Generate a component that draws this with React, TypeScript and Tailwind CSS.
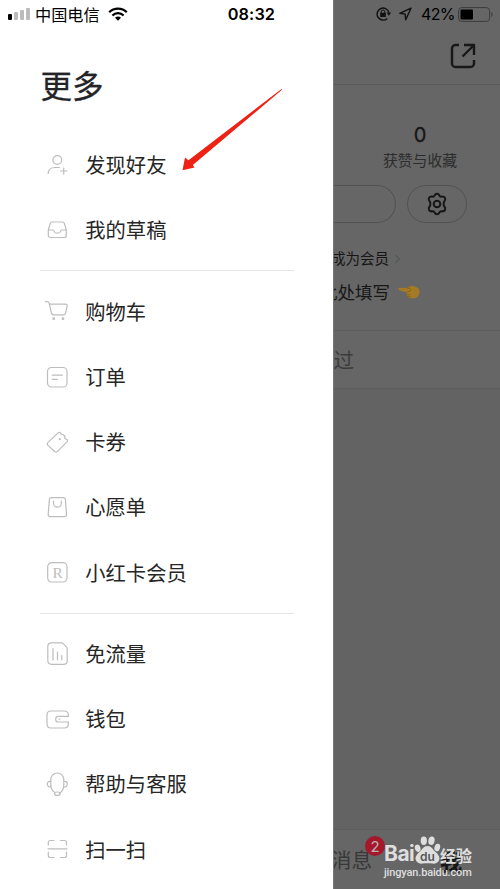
import type { ReactNode } from "react";

const ICONS: Record<string, ReactNode> = {
  friends: (
    <>
      <circle cx="12.3" cy="7" r="4.4" />
      <path d="M3.2 20.500c0-4 3-6 7-6h4.300M15.500 18h6.500M18.700 14.900v6.200" />
    </>
  ),
  drafts: (
    <path d="M7 4h10.600c.9 0 1.400.4 1.700 1.200l2 6.800v5.500a2 2 0 0 1-2 2h-14a2 2 0 0 1-2-2V12l2-6.800C5.600 4.400 6.100 4 7 4zM3.300 12h4.500c1.500 0 1.500 3 3 3h3c1.500 0 1.500-3 3-3h4.500" />
  ),
  cart: (
    <>
      <path d="M.5 2.700h1.800c1.100 0 1.700.600 2 1.800l2.100 9.500c.3 1.300 1 1.900 2.200 1.900h9.800c1.200 0 1.900-.6 2.200-1.800l1.500-7c.3-1.400-.3-2-1.500-2H4.500" />
      <circle cx="8.700" cy="19.700" r=".8" fill="currentColor" />
      <circle cx="18" cy="19.700" r=".8" fill="currentColor" />
    </>
  ),
  order: (
    <>
      <rect x="2.500" y="2.500" width="19.500" height="19.500" rx="4" />
      <path d="M7.200 10.200h10.200M7.200 14.300h5.200" />
    </>
  ),
  coupon: (
    <>
      <path d="m12.600 3.400.7-.6c.8-.7 1.600-.7 2.300 0 .2 1.400 1 2.100 2.500 1.900l.7.7c1 .5 1.500 1.300 1 2.300-.1 1.100.5 1.400 1.700 1.500l.7.6c.6.500.5 1.200 0 1.800l-9.700 9.700c-1 1-2 1-3 0l-6.500-5.900c-1-1-1-2 0-3z" />
      <circle cx="14.800" cy="9.200" r=".5" fill="currentColor" />
    </>
  ),
  wish: (
    <>
      <path d="M6.500 2.700h11.800c1.200 0 2 .7 2.100 1.900l1.100 14.500c.1 1.700-.6 2.500-2.200 2.500H5.400c-1.600 0-2.300-.8-2.200-2.500L4.400 4.600c.1-1.200.9-1.900 2.100-1.900z" />
      <path d="M8.500 6.200v2a3.900 3.900 0 0 0 7.800 0v-2" />
    </>
  ),
  member: (
    <>
      <rect x="2.700" y="2.700" width="19.300" height="19.300" rx="4" />
      <text x="12.600" y="17.500" textAnchor="middle" fontSize="15.500" stroke="none" fill="currentColor" fontFamily="'Liberation Serif', serif">R</text>
    </>
  ),
  data: (
    <>
      <path d="M6.500.9h9.600c1 0 1.700.3 2.400 1l2.800 2.900c.7.7.9 1.300.9 2.300v11.600c0 2.300-1.300 3.600-3.600 3.600H6.500c-2.300 0-3.700-1.300-3.700-3.600V4.500C2.800 2.200 4.200.9 6.500.9z" />
      <path d="M8 6.500v11.300M12.500 10v7.800M16.800 13.500v4.300" />
    </>
  ),
  wallet: (
    <>
      <path d="M23.300 9.300V8c0-2.700-1.200-4-4-4H6C3.300 4 2 5.300 2 8v9c0 2.700 1.300 4 4 4h13.300c2.800 0 4-1.300 4-4v-2" />
      <path d="M23.300 9.300H13.500a2.800 2.800 0 0 0 0 5.700h9.800M14 12.100h.8" />
    </>
  ),
  help: (
    <>
      <path d="M9.200 20c-2.200-1.500-3.400-4-3.400-7.500V7.500a6.500 6.500 0 0 1 13 0v5c0 4-1.300 7-4.200 8.600" />
      <path d="M5.800 9.300H5a2.800 2.800 0 0 0 0 5.600h.9M18.800 9.300h.8a2.800 2.800 0 0 1 0 5.600h-.9" />
      <ellipse cx="12.300" cy="21.700" rx="2.800" ry="1.700" />
    </>
  ),
  scan: (
    <path d="M3.300 8V5.500a2 2 0 0 1 2-2H9M15.500 3.500h4a2 2 0 0 1 2 2V8M3.300 15v3.500a2 2 0 0 0 2 2H9M15.500 20.500h4a2 2 0 0 0 2-2V15M3 11.800h19" />
  ),
};

const GROUPS = [
  [
    { icon: "friends", label: "发现好友" },
    { icon: "drafts", label: "我的草稿" },
  ],
  [
    { icon: "cart", label: "购物车" },
    { icon: "order", label: "订单" },
    { icon: "coupon", label: "卡券" },
    { icon: "wish", label: "心愿单" },
    { icon: "member", label: "小红卡会员" },
  ],
  [
    { icon: "data", label: "免流量" },
    { icon: "wallet", label: "钱包" },
    { icon: "help", label: "帮助与客服" },
    { icon: "scan", label: "扫一扫" },
  ],
];

function MenuRow({ icon, label }: { icon: string; label: string }) {
  return (
    <li className="flex h-[65.250px] items-center pl-[45px]">
      <svg viewBox="0 0 24 24" className="size-6 shrink-0 overflow-visible text-[#bdbdbd]" fill="none" stroke="currentColor" strokeWidth="1.200" strokeLinecap="round" strokeLinejoin="round">
        {ICONS[icon]}
      </svg>
      <span className="mb-[1.500px] ml-[16.300px] text-[20.300px] leading-none whitespace-nowrap text-[#262626]">{label}</span>
    </li>
  );
}

function Drawer() {
  return (
    <aside className="flex h-full w-[333px] shrink-0 flex-col overflow-hidden bg-white">
      <header className="flex h-7 shrink-0 items-center pl-2 text-black">
        <div className="flex h-3 items-end gap-[2px]">
          <i className="h-[6px] w-1 rounded-[1px] bg-black" />
          <i className="h-2 w-1 rounded-[1px] bg-[#bbb]" />
          <i className="h-[10px] w-1 rounded-[1px] bg-[#bbb]" />
          <i className="h-3 w-1 rounded-[1px] bg-[#bbb]" />
        </div>
        <span className="ml-[5px] text-[16.200px] leading-none">中国电信</span>
        <svg viewBox="0 0 20 14" className="ml-2 h-[14px] w-5" fill="none" stroke="#000" strokeWidth="2.300">
          <path d="M1.200 5.300a12.500 12.500 0 0 1 17.600 0M4.400 8.500a8 8 0 0 1 11.200 0" />
          <path d="M7 10.800a4.400 4.400 0 0 1 6 0l-3 2.900z" fill="#000" stroke="none" />
        </svg>
        <time className="ml-[100px] font-[Inter] text-[16.300px] leading-none font-semibold tracking-[0.100px]">08:32</time>
      </header>
      <h1 className="mt-[40px] h-[64.300px] shrink-0 pl-[40.500px] text-[31.500px] leading-8 font-normal text-[#242428] [-webkit-text-stroke:0.3px_#242428]">更多</h1>
      <nav>
        {GROUPS.map((group, index) => (
          <div key={group[0].icon}>
            {index > 0 && (
              <div className="flex h-4 items-center pl-10">
                <hr className="w-[254px] border-t border-[#e6e6e6]" />
              </div>
            )}
            <ul>
              {group.map((item) => (
                <MenuRow key={item.icon} {...item} />
              ))}
            </ul>
          </div>
        ))}
      </nav>
    </aside>
  );
}

function Profile() {
  return (
    <main className="flex h-full w-[167px] flex-col overflow-hidden border-l border-[#777] bg-[#666] text-[#161616]">
      <div className="flex h-7 shrink-0 items-center justify-end pr-[6px] text-black">
        <svg viewBox="0 0 16 16" className="mr-px h-4 w-4 shrink-0" fill="none" stroke="#111" strokeWidth="1.400">
          <path d="M11.300 12.400A6 6 0 1 1 12.900 6.500" />
          <path d="M10.500 6.500h4.600l-2.200 3.200z" fill="#111" stroke="none" />
          <path d="M5.200 7V5.800a1.800 1.800 0 0 1 3.600 0V7" strokeWidth="1" />
          <rect x="4.200" y="6.800" width="5.600" height="4.200" rx=".5" fill="#111" stroke="none" />
        </svg>
        <svg viewBox="0 0 14 14" className="ml-[6px] size-[14px] shrink-0" fill="none" stroke="#111" strokeWidth="1.400" strokeLinejoin="round">
          <path d="M12 1.200 .8 6.300l5.300.8.600 5.600z" />
        </svg>
        <span className="ml-[8px] w-[34px] font-[Inter] text-[16px] leading-none tracking-[-0.700px] whitespace-nowrap">42%</span>
        <svg viewBox="0 0 36 15" className="ml-[3px] h-[15px] w-9 shrink-0">
          <rect x=".6" y=".6" width="31" height="13.800" rx="3.200" fill="none" stroke="#3c3c3c" />
          <rect x="2.500" y="2.500" width="12.500" height="10" rx="1" fill="#000" />
          <path d="M33.200 5c2 .6 2 4.400 0 5z" fill="#444" />
        </svg>
      </div>
      <div className="flex h-[57px] shrink-0 items-center justify-end border-b border-[#5a5a5a] pr-6">
        <svg viewBox="0 0 26 26" className="size-[26px]" fill="none" stroke="#181818" strokeWidth="2.400" strokeLinejoin="round">
          <path d="M9 2H5.500A3.500 3.500 0 0 0 2 5.500v15A3.500 3.500 0 0 0 5.500 24h15a3.500 3.500 0 0 0 3.500-3.500V17M14 2h10v10M24 2 12.500 13.500" />
        </svg>
      </div>
      <div className="flex h-[100px] shrink-0 flex-col items-center pt-[38px] pl-[6px]">
        <span className="font-[Inter] text-[20px] leading-6 [-webkit-text-stroke:0.3px_#161616]">0</span>
        <span className="mt-[5px] text-[14.800px] leading-4 text-[#2c2c2c]">获赞与收藏</span>
      </div>
      <div className="flex h-[38px] shrink-0 gap-[11px]">
        <div className="w-[62px] shrink-0 rounded-r-full border border-l-0 border-[#525252]" />
        <button className="flex w-[60px] items-center justify-center rounded-full border border-[#525252]">
          <svg viewBox="0 0 24 24" className="size-6" fill="none" stroke="#151515" strokeWidth="2" strokeLinejoin="round">
            <path d="M9.700 3.400C10.200 2.100 10.800 1.800 12 1.800s1.800.3 2.300 1.600c.5 1.100 1.300 1.500 2.500 1.200 1.600-.3 2.300 0 3.100 1.200s.7 2-.2 3c-1.500 1.600-1.500 4.600 0 6.200 1 1.100 1 1.900.2 3.100-.8 1.200-1.500 1.500-3.100 1.200-1.200-.2-2 .2-2.500 1.300-.5 1.300-1.100 1.600-2.300 1.600s-1.800-.3-2.300-1.600c-.5-1.100-1.300-1.500-2.500-1.300-1.600.3-2.300 0-3.100-1.200s-.7-2 .2-3.100c1.500-1.600 1.500-4.600 0-6.200-1-1-1-1.800-.2-3 .8-1.200 1.500-1.500 3.100-1.200 1.200.3 2-.1 2.500-1.200z" />
            <circle cx="12" cy="12" r="3.300" />
          </svg>
        </button>
      </div>
      <div className="mt-[27px] flex h-[17px] w-[68px] shrink-0 items-center justify-end">
        <span className="text-[14.500px] leading-none whitespace-nowrap">成为会员</span>
        <svg viewBox="0 0 8 10" className="ml-[5px] h-[10px] w-2 shrink-0" fill="none" stroke="#4b4b4b">
          <path d="m1.500 1.200 4 3.800-4 3.800" />
        </svg>
      </div>
      <div className="mt-[13px] flex h-6 w-[86px] shrink-0 items-center justify-end">
        <span className="text-[17.500px] leading-none whitespace-nowrap">此处填写</span>
        <svg viewBox="0 0 22 14" className="ml-2 h-[14px] w-[22px] shrink-0">
          <path d="M.5 4.200c-.1-1 .5-1.500 1.500-1.400l7 .3c1.500-1.600 3.400-2.400 5.300-2.100 3.600.5 7 1.800 7.200 5 .2 3.600-1.200 6.500-4.500 7-3 .4-6.500.2-7.500-1-.8-1-.4-1.700-.8-2.500-.7-.8-.6-1.600.1-2.300L1.600 5.400C.9 5.300.6 4.900.5 4.200z" fill="#a57a24" />
          <path d="M9 3.200c2.200-.5 4.300.8 3.500 2.300-.5 1-2.200 1.200-3.700 1.600M8.600 9.500c1.200.4 2.400.3 3.600 0M9.300 11.500c1 .4 2 .4 3 0" fill="none" stroke="#7d5715" strokeWidth=".7" />
        </svg>
      </div>
      <div className="mt-[25.500px] flex h-[59px] shrink-0 items-center border-y border-[#5d5d5d]">
        <span className="flex w-[20px] justify-end text-[20.500px] leading-none whitespace-nowrap text-[#3c3c3c]">赞过</span>
      </div>
      <div className="flex-1 bg-[#636363]" />
      <footer className="flex h-[60px] shrink-0 items-center border-t border-[#5e5e5e] bg-[#666]">
        <div className="relative flex w-[38px] justify-end">
          <span className="text-[20.500px] leading-none whitespace-nowrap text-[#383838]">消息</span>
          <span className="absolute -top-[13px] -right-[13px] flex size-5 items-center justify-center rounded-full bg-[#a5182c] font-[Inter] text-[15px] leading-none text-[#c0b3b5]">2</span>
        </div>
        <span className="ml-[68px] text-[22px] leading-none font-bold text-[#151515]">我</span>
      </footer>
    </main>
  );
}

function Watermark() {
  return (
    <div className="absolute top-[835px] left-[384px] w-[90px] text-[#dedede]">
      <div className="flex h-[30px] items-end">
        <span className="w-[31px] shrink-0 font-[Inter] text-[21px] leading-[23px] font-bold tracking-[-0.500px]">Bai</span>
        <svg viewBox="0 0 25 30" className="h-[30px] w-[25px] shrink-0 overflow-visible" fill="currentColor">
          <ellipse cx="2.700" cy="13.300" rx="2.800" ry="3.800" transform="rotate(-15 2.700 13.300)" />
          <ellipse cx="8.800" cy="5.700" rx="3.100" ry="4.200" />
          <ellipse cx="16.500" cy="5.700" rx="3.100" ry="4.200" transform="rotate(10 16.500 5.700)" />
          <ellipse cx="22.300" cy="12.500" rx="2.800" ry="3.800" transform="rotate(15 22.300 12.500)" />
          <path d="M12.500 11c4.300 0 4.800 3.200 7.800 5.700 3.200 2.700 5 5.800 3.800 8.600-1.200 2.900-4 3.700-7 3.300-3-.4-6.200-.4-9.200 0-3 .4-5.800-.4-7-3.300-1.200-2.800.6-5.900 3.800-8.600 3-2.500 3.500-5.700 7.800-5.700z" />
          <text x="12.500" y="25.500" textAnchor="middle" fontSize="12" fontWeight="600" fontFamily="Inter, sans-serif" fill="#565656">du</text>
        </svg>
        <span className="text-[16px] leading-[20px] font-bold whitespace-nowrap">经验</span>
      </div>
      <div className="mt-px font-[Roboto] text-[11px] leading-[14px] font-medium tracking-[-0.150px] whitespace-nowrap">jingyan.baidu.com</div>
    </div>
  );
}

export default function App() {
  return (
    <div className="relative flex h-[889px] w-[500px] overflow-hidden bg-white font-['Noto_Sans_CJK_SC',sans-serif]">
      <Drawer />
      <Profile />
      <svg viewBox="0 0 104 84" className="absolute top-[88px] left-[180px] h-[84px] w-[104px]" fill="#ee2115">
        <path d="M101.500 1 8.500 72.300 5 69.500 2.500 82.300 14.500 79.500 12.800 77 102 1.800z" />
      </svg>
      <Watermark />
    </div>
  );
}
